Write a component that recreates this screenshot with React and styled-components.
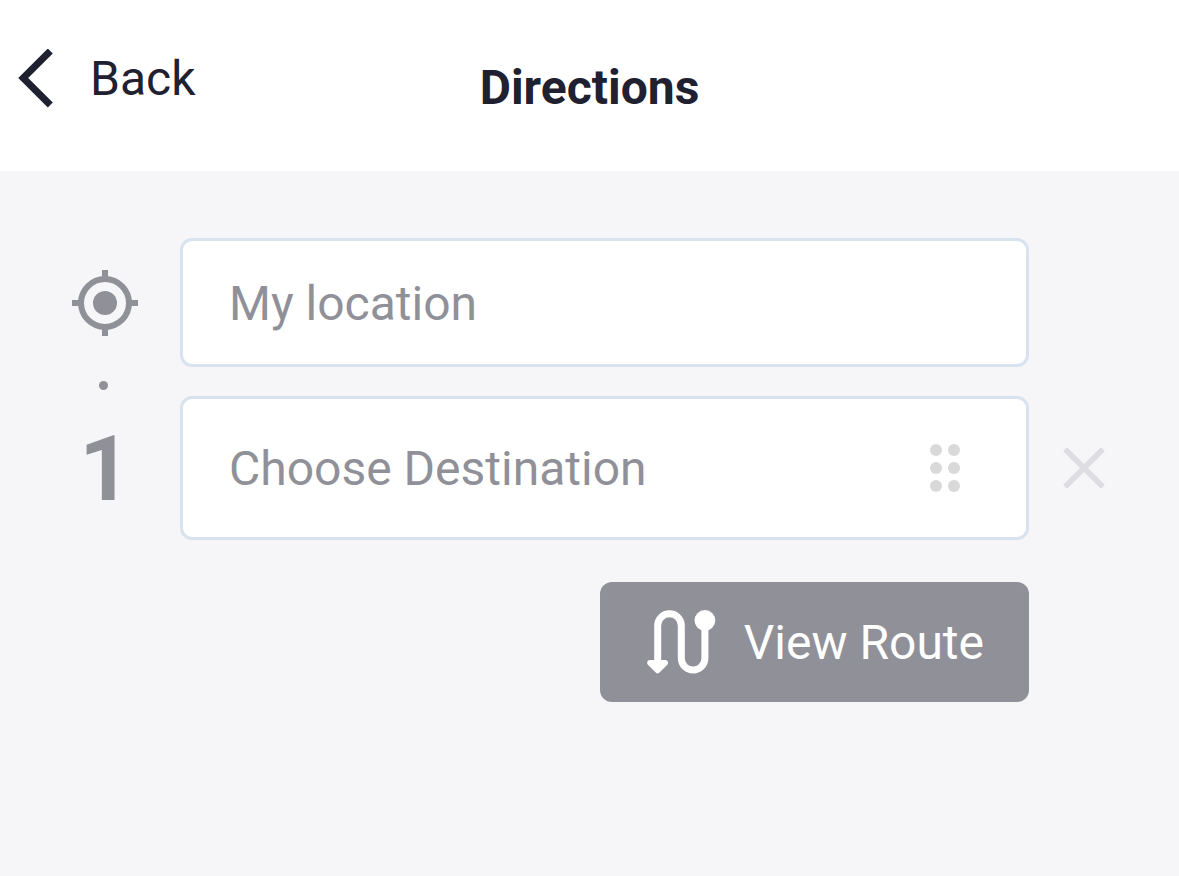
import React from "react";
import styled, { createGlobalStyle } from "styled-components";

const GlobalStyle = createGlobalStyle`
  *, *::before, *::after { box-sizing: border-box; }
  body {
    margin: 0;
    background: #f6f6f9;
    color: #1f2030;
    font-family: Roboto, "Liberation Sans", sans-serif;
    font-size: 48px;
    line-height: 56px;
  }
  button, input { font: inherit; color: inherit; }
`;

const Header = styled.header`
  display: grid;
  grid-template-columns: 1fr auto 1fr;
  align-items: start;
  height: 171px;
  padding: 49px 18px 0;
  background: #fff;
`;

const PlainButton = styled.button`
  display: flex;
  align-items: center;
  padding: 0;
  border: 0;
  background: none;
  cursor: pointer;
`;

const BackButton = styled(PlainButton)`
  justify-self: start;
  gap: 36px;
  height: 60px;
`;

const Title = styled.h1`
  margin: 0;
  padding-top: 11px;
  font-size: 48px;
  line-height: 56px;
  font-weight: 700;
`;

const Form = styled.form`
  padding: 67px 40px 0 30px;
`;

const Row = styled.div`
  display: grid;
  grid-template-columns: 150px 1fr 110px;
  align-items: center;
  justify-items: center;
`;

const Connector = styled(Row)`
  height: 29px;
`;

const Dot = styled.span`
  width: 9px;
  height: 9px;
  margin: 8px 3px 0 0;
  border-radius: 50%;
  background: #909098;
`;

const OriginMarker = styled.label`
  display: flex;
`;

const StopNumber = styled.label`
  padding-top: 4px;
  color: #909098;
  font-size: 90px;
  line-height: 90px;
  font-weight: 700;
`;

const Field = styled.div`
  display: flex;
  align-items: center;
  justify-self: stretch;
  height: ${(p) => (p.$tall ? 144 : 129)}px;
  padding: 0 66px 0 46px;
  border: 3px solid #d8e3ef;
  border-radius: 12px;
  background: #fff;
`;

const TextInput = styled.input`
  flex: 1;
  min-width: 0;
  height: 100%;
  padding: 1px 0 0;
  border: 0;
  outline: 0;
  background: none;
  &::placeholder { color: #909098; opacity: 1; }
`;

const Actions = styled(Row)`
  padding-top: 42px;
`;

const RouteButton = styled.button`
  grid-column: 2;
  justify-self: end;
  display: flex;
  align-items: center;
  gap: 28px;
  height: 120px;
  padding: 2px 45px 0 47px;
  border: 0;
  border-radius: 12px;
  background: #909098;
  color: #fff;
  cursor: pointer;
`;

const BackIcon = () => (
  <svg width="36" height="60" viewBox="0 0 36 60" fill="none" aria-hidden="true">
    <path d="M32.3 2 5.2 29 32.3 56" stroke="#1f2030" strokeWidth="7" />
  </svg>
);

const LocationIcon = () => (
  <svg width="66" height="66" viewBox="0 0 66 66" fill="none" stroke="#909098" strokeWidth="6" aria-hidden="true">
    <circle cx="33" cy="33" r="24" />
    <circle cx="33" cy="33" r="12" fill="#909098" stroke="none" />
    <path d="M33 0v8M33 58v8M0 33h8M58 33h8" />
  </svg>
);

const GripIcon = () => (
  <svg width="30" height="48" viewBox="0 0 30 48" fill="#d9d9d9" aria-hidden="true">
    {[6, 24, 42].map((y) => (
      <React.Fragment key={y}>
        <circle cx="6" cy={y} r="6" />
        <circle cx="24" cy={y} r="6" />
      </React.Fragment>
    ))}
  </svg>
);

const CloseIcon = () => (
  <svg width="42" height="42" viewBox="0 0 42 42" fill="none" aria-hidden="true">
    <path d="M2.2 2.2 39.8 39.8M39.8 2.2 2.2 39.8" stroke="#dddde2" strokeWidth="5.6" />
  </svg>
);

const RouteIcon = () => (
  <svg width="69" height="66" viewBox="0 0 69 66" fill="none" aria-hidden="true">
    <path
      d="M10.7 52V15.5a11.8 11.8 0 0 1 23.6 0v32.8a11.8 11.8 0 0 0 23.6 0V14"
      stroke="#fff"
      strokeWidth="7"
    />
    <circle cx="57.9" cy="10.5" r="10.4" fill="#fff" />
    <path
      d="M3 50h15.2c2.7 0 3.8 3 1.9 4.9l-7.6 7.6c-1.2 1.2-2.6 1.2-3.8 0L1.1 54.9C-.8 53 .3 50 3 50Z"
      fill="#fff"
    />
  </svg>
);

export default function App() {
  return (
    <>
      <GlobalStyle />
      <Header>
        <BackButton type="button">
          <BackIcon />
          Back
        </BackButton>
        <Title>Directions</Title>
      </Header>
      <Form onSubmit={(e) => e.preventDefault()}>
        <Row>
          <OriginMarker htmlFor="origin">
            <LocationIcon />
          </OriginMarker>
          <Field>
            <TextInput id="origin" type="text" aria-label="My location" placeholder="My location" />
          </Field>
        </Row>
        <Connector>
          <Dot />
        </Connector>
        <Row>
          <StopNumber htmlFor="stop-1">1</StopNumber>
          <Field $tall>
            <TextInput id="stop-1" type="text" placeholder="Choose Destination" />
            <PlainButton type="button" aria-label="Reorder stop">
              <GripIcon />
            </PlainButton>
          </Field>
          <PlainButton type="button" aria-label="Remove stop">
            <CloseIcon />
          </PlainButton>
        </Row>
        <Actions>
          <RouteButton type="submit">
            <RouteIcon />
            View Route
          </RouteButton>
        </Actions>
      </Form>
    </>
  );
}
